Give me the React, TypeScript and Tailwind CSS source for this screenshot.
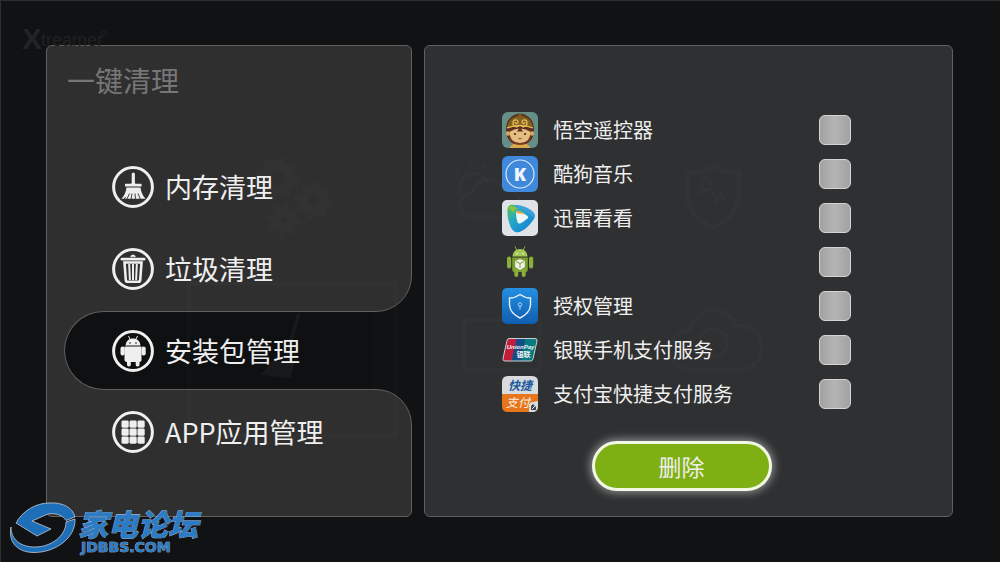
import { useState } from 'react'
import type { ReactNode } from 'react'

const APPS: { id: string; name: string; icon: ReactNode }[] = [
  { id: 'wukong', name: '悟空遥控器', icon: <WukongIcon /> },
  { id: 'kugou', name: '酷狗音乐', icon: <KugouIcon /> },
  { id: 'kankan', name: '迅雷看看', icon: <KankanIcon /> },
  { id: 'unnamed', name: '', icon: <AndroidAppIcon /> },
  { id: 'auth', name: '授权管理', icon: <ShieldIcon /> },
  { id: 'unionpay', name: '银联手机支付服务', icon: <UnionPayIcon /> },
  { id: 'alipay', name: '支付宝快捷支付服务', icon: <AlipayIcon /> },
]

export default function App() {
  const [checked, setChecked] = useState<string[]>([])

  const toggle = (id: string) =>
    setChecked((prev) => (prev.includes(id) ? prev.filter((x) => x !== id) : [...prev, id]))

  return (
    <main className="relative min-h-screen overflow-hidden border-t border-l border-[#2c3030] bg-[#111213] font-['Noto_Sans_CJK_SC',sans-serif] text-[#efefef]">
      <div className="grid grid-cols-[9fr_13fr] gap-3 pt-11 pr-[47px] pb-11 pl-[45px]">
        <nav aria-label="一键清理" className="flex flex-col">
          <div className="flex h-[267px] flex-col rounded-t-md rounded-br-[36px] border border-[#606060] bg-[#2f2f2f]">
            <h1 className="pt-3 pl-5 text-[28px] leading-[44px] text-[#777777]">一键清理</h1>
            <div className="flex flex-col gap-10 pt-16 pl-[65px]">
              <NavItem label="内存清理" icon={<BroomGlyph />} />
              <NavItem label="垃圾清理" icon={<TrashGlyph />} />
            </div>
          </div>

          {/* selected entry is cut out of the panel */}
          <div className="relative z-10 -my-px flex border-l border-[#606060] bg-linear-to-r from-[#2f2f2f] from-20% to-transparent to-20%">
            <div className="mr-10 ml-[17px] flex h-[79px] grow items-center rounded-l-full border-y border-l border-[#606060] bg-[#0f1011] pl-[47px]">
              <NavItem label="安装包管理" icon={<AndroidGlyph />} active />
            </div>
          </div>

          <div className="h-32 rounded-tr-[36px] rounded-b-md border border-[#606060] bg-[#2f2f2f] pt-[21px] pl-[65px]">
            <NavItem label="APP应用管理" icon={<GridGlyph />} />
          </div>
        </nav>

        <section
          aria-label="安装包管理"
          className="flex flex-col items-center rounded-md border border-[#606060] bg-[#2f3031] pt-[62px] pr-3.5"
        >
          <ul className="flex w-full flex-col pr-[87px] pl-[77px]">
            {APPS.map((app) => (
              <li key={app.id} className="flex h-11 items-center">
                <label htmlFor={app.id} className="flex grow items-center gap-[15px] text-xl leading-7">
                  <span className="size-9 shrink-0">{app.icon}</span>
                  {app.name}
                </label>
                <input
                  id={app.id}
                  type="checkbox"
                  aria-label={app.name || '未命名安装包'}
                  checked={checked.includes(app.id)}
                  onChange={() => toggle(app.id)}
                  className="h-[30px] w-8 appearance-none rounded-md border border-[#d4d4d4] bg-linear-to-r from-[#a2a2a2] via-[#b4b4b4] to-[#a2a2a2] checked:bg-[#7fb013] checked:bg-none"
                />
              </li>
            ))}
          </ul>
          <button
            type="button"
            onClick={() => setChecked([])}
            className="mt-[25px] h-[50px] w-[180px] rounded-full border-[3px] border-[#f1f8e4] bg-[#7fb013] text-[23px] leading-8 shadow-[0_0_9px_2px_rgba(255,255,255,0.45)]"
          >
            删除
          </button>
        </section>
      </div>

      <Backdrop />
      <SiteLogo />
    </main>
  )
}

function NavItem({ label, icon, active }: { label: string; icon: ReactNode; active?: boolean }) {
  return (
    <button
      type="button"
      aria-current={active ? 'page' : undefined}
      className="flex items-center gap-[11px] text-left text-[27px] leading-[42px]"
    >
      <svg viewBox="0 0 42 42" className="size-[42px] shrink-0" aria-hidden="true">
        <circle cx="21" cy="21" r="19.4" fill="none" stroke="#efefef" strokeWidth="3" />
        {icon}
      </svg>
      {label}
    </button>
  )
}

function BroomGlyph() {
  return (
    <g fill="#efefef">
      <rect x="19.7" y="6.5" width="3.2" height="13" rx="1.6" />
      <path d="M13 18.5q0-.8.8-.8h5.5l1-2h2l1 2h5.5q.8 0 .8.8v2H13z" />
      <path d="M14.5 21.5H28.5C29 25.5 30.5 29.5 33.5 32.8H9.5C12.5 29.5 14 25.5 14.5 21.5z" />
      <path
        d="M14.7 33.5l2.8-6M19 33.5l1-6M23.5 33.5l-.5-6M28.5 33.5l-2.5-6M12 33.5l1.5-2.5"
        stroke="#2f2f2f"
        strokeWidth="0.9"
      />
    </g>
  )
}

function TrashGlyph() {
  return (
    <g fill="none" stroke="#efefef">
      <path d="M10 11.2H32" strokeWidth="2.8" strokeLinecap="round" />
      <path d="M19 9q2-3 4 0" strokeWidth="2" />
      <path d="M12.5 14.5L13.8 32q.2 1.7 1.8 1.7H26.4q1.6 0 1.8-1.7L29.5 14.5z" strokeWidth="2.6" />
      <path d="M17.2 16l.7 16M21 16v16M24.8 16l-.7 16" strokeWidth="2" />
    </g>
  )
}

function AndroidGlyph() {
  return (
    <g fill="#efefef">
      <path d="M13.5 15.5c.5-4.5 3.5-7 7.5-7s7 2.5 7.5 7z" />
      <path d="M16.5 6l1.7 3.5M25.5 6l-1.7 3.5" stroke="#efefef" />
      <rect x="8.5" y="16.5" width="4.2" height="9" rx="2" />
      <rect x="29.5" y="16.5" width="4.2" height="9" rx="2" />
      <path d="M12.5 16.5h17v13q0 2.5-2.5 2.5H15q-2.5 0-2.5-2.5z" />
      <rect x="15" y="29" width="3.8" height="7.5" rx="1.7" />
      <rect x="23.7" y="29" width="3.8" height="7.5" rx="1.7" />
      <circle cx="18" cy="13" r="0.8" fill="#0f1011" />
      <circle cx="24" cy="13" r="0.8" fill="#0f1011" />
    </g>
  )
}

function GridGlyph() {
  return (
    <g fill="#efefef">
      {[9.5, 17.5, 25.5].map((y) =>
        [9.5, 17.5, 25.5].map((x) => (
          <rect key={`${x}-${y}`} x={x} y={y} width="7.2" height="7.2" rx="1.4" />
        )),
      )}
    </g>
  )
}

function WukongIcon() {
  return (
    <svg viewBox="0 0 36 36" aria-hidden="true">
      <rect width="36" height="36" rx="6" fill="#659088" />
      <path d="M8 36q1-5 10-5t10 5z" fill="#d9a94c" />
      <path d="M18 1.5C9 2.5 4 8.5 4 17.5q0 11 8 14.5h12q8-3.5 8-14.5C32 8.5 27 2.5 18 1.5z" fill="#5b301c" />
      <path d="M18 1L20 4C27 5.5 30.5 10 31 16q-13-4-26 0C5.5 10 9 5.5 16 4z" fill="#826020" />
      <circle cx="6" cy="21.5" r="2.2" fill="#d7a766" />
      <circle cx="30" cy="21.5" r="2.2" fill="#d7a766" />
      <path d="M8 19.5q10-6 20 0v4.5q-1 6.5-10 7-9-.5-10-7z" fill="#e5bd82" />
      <path
        d="M18 13c-2 3-7 2-7-2 0-4 5-4 5-1 0 2-3 2-3 0M18 13c2 3 7 2 7-2 0-4-5-4-5-1 0 2 3 2 3 0M5 16q13-5 26 0"
        fill="none"
        stroke="#e3bd55"
        strokeWidth="1.3"
      />
      <path d="M18 15l3 4.5h-6z" fill="#5b301c" />
      <circle cx="13" cy="22" r="1.1" fill="#402514" />
      <circle cx="23" cy="22" r="1.1" fill="#402514" />
      <path d="M16.5 26.5q1.5.7 3 0" fill="none" stroke="#7a4322" />
      <path d="M7.5 25q2 7 10.5 7t10.5-7" fill="none" stroke="#7a3a20" strokeWidth="1.8" />
    </svg>
  )
}

function KugouIcon() {
  return (
    <svg viewBox="0 0 36 36" aria-hidden="true">
      <rect width="36" height="36" rx="6" fill="#3f88da" />
      <circle cx="18" cy="18" r="14" fill="none" stroke="#d6e8fa" strokeWidth="1.2" />
      <text
        x="18"
        y="24.5"
        fontSize="18"
        fontWeight="900"
        textAnchor="middle"
        fontFamily="Open Sans, sans-serif"
        fill="#eef6fe"
      >
        K
      </text>
    </svg>
  )
}

function KankanIcon() {
  return (
    <svg viewBox="0 0 36 36" aria-hidden="true">
      <defs>
        <linearGradient id="kankan" x1="0" y1="0" x2="1" y2="1">
          <stop offset="0" stopColor="#63bf3c" />
          <stop offset="0.35" stopColor="#25abc0" />
          <stop offset="0.7" stopColor="#1a8fd2" />
          <stop offset="1" stopColor="#1672bd" />
        </linearGradient>
      </defs>
      <rect width="36" height="36" rx="5" fill="#dfe3e7" />
      <path
        d="M5.5 9C6 5 9 4.5 13 5 20 5.5 27 8 31 12c3 3 2 6-.5 9-3.5 5-8 9-13 11-5 1.5-8-2-10-8-1.5-5-2.5-10-2-15z"
        fill="url(#kankan)"
      />
      <path d="M13 5C20 5 27 8 31 12c2 2 2 4 1 6-4-5-11-9-19-10z" fill="#3d9fda" />
      <path d="M6 8c2-3 8-2 10 1-3 0-5 1-4 5-1-2-3-5-6-6z" fill="#8bc440" />
      <path d="M14 12.5q0-2 2-1.5 5 1 9.5 5 1.5 1.5 0 2.5-4 3.500-7.500 5-2 .5-2.500-1.500Q14 18 14 12.500z" fill="#f0f5f8" />
      <path d="M13.5 10.5q6 .5 10 4-4-1.5-8-1z" fill="#e6a13e" />
    </svg>
  )
}

function AndroidAppIcon() {
  return (
    <svg viewBox="0 0 36 36" aria-hidden="true">
      <g fill="#8aaf38">
        <path d="M10.5 12.5c.3-4.5 3-7.5 7.5-7.5s7.2 3 7.5 7.5z" fill="#a5c658" />
        <path d="M13 2.5l2 4M23 2.5l-2 4" stroke="#8aaf38" />
        <rect x="5" y="12.5" width="4.2" height="12" rx="2" />
        <rect x="27" y="12.5" width="4.2" height="12" rx="2" />
        <path d="M10.2 13.5h15.6V26q0 2-2 2H12.2q-2 0-2-2z" fill="#7b9f30" />
        <rect x="12.3" y="25" width="4" height="8" rx="2" />
        <rect x="19.7" y="25" width="4" height="8" rx="2" />
      </g>
      <circle cx="15" cy="9.5" r="0.8" fill="#f3f8e4" />
      <circle cx="21" cy="9.5" r="0.8" fill="#f3f8e4" />
      <path d="M18 15l4.8 2v6L18 26l-4.8-3v-6z" fill="#f0f1ec" />
      <path d="M14 17.5l4 2 4-2M18 19.5V24" fill="none" stroke="#7b9f30" />
    </svg>
  )
}

function ShieldIcon() {
  return (
    <svg viewBox="0 0 36 36" aria-hidden="true">
      <defs>
        <linearGradient id="shield" x1="0" y1="0" x2="0" y2="1">
          <stop offset="0" stopColor="#2390e2" />
          <stop offset="1" stopColor="#0f5cb0" />
        </linearGradient>
      </defs>
      <rect width="36" height="36" rx="5" fill="url(#shield)" />
      <path
        d="M18 6.5q5 3.5 10.5 3.5v7Q28 25 18 30 8 25 7.5 17v-7Q13 10 18 6.5z"
        fill="none"
        stroke="#e3f0fc"
        strokeWidth="1.4"
      />
      <circle cx="18" cy="16.5" r="1.8" fill="none" stroke="#bcdcf8" strokeWidth="0.9" />
      <path d="M18 18.3V21.5" stroke="#bcdcf8" />
    </svg>
  )
}

function UnionPayIcon() {
  return (
    <svg viewBox="0 0 36 36" aria-hidden="true">
      <path d="M7 6.5H16L11.5 29H3q-2.5 0-2-2.5L5 8.5Q5.4 6.5 7 6.5z" fill="#c41d3c" />
      <path d="M14.5 6.5H25L20.5 29H9.5z" fill="#144b86" />
      <path d="M23.5 6.5h9.5q2.5 0 2 2.5L31 27q-.5 2-2.5 2H19z" fill="#087b80" />
      <path
        d="M7 6.5H33q2.5 0 2 2.5L31 27q-.5 2-2.5 2H3q-2.5 0-2-2.5L5 8.5Q5.4 6.5 7 6.5z"
        fill="none"
        stroke="#c9cfd0"
      />
      <text x="18.5" y="16.5" fontSize="6" fontWeight="700" fontStyle="italic" textAnchor="middle" fontFamily="Liberation Sans, sans-serif" fill="#f2f2f2">
        UnionPay
      </text>
      <text x="21.5" y="25" fontSize="7" fontWeight="700" textAnchor="middle" fill="#f2f2f2">
        银联
      </text>
    </svg>
  )
}

function AlipayIcon() {
  return (
    <svg viewBox="0 0 36 36" aria-hidden="true">
      <path d="M0 18V6q0-6 6-6H30q6 0 6 6V18z" fill="#d9dcdf" />
      <path d="M0 18H36V30q0 6-6 6H6q-6 0-6-6z" fill="#e5761c" />
      <text x="18" y="14" fontSize="12" fontWeight="700" fontStyle="italic" textAnchor="middle" fill="#1b5a9e">
        快捷
      </text>
      <text x="16" y="31" fontSize="12" fontStyle="italic" textAnchor="middle" fill="#fbeee0">
        支付
      </text>
      <path d="M36 25v5q0 6-6 6h-3v-6q0-4 4-4z" fill="#d9dcdf" />
      <path d="M29 34v-4l2-2 3 3v3z" fill="#3c4a55" />
      <path d="M30 33l3-3" fill="none" stroke="#e8ebed" />
    </svg>
  )
}

// Home screen faintly visible through the dialog
function Backdrop() {
  return (
    <svg
      viewBox="0 0 1000 562"
      preserveAspectRatio="xMidYMin slice"
      className="pointer-events-none absolute inset-0 z-20 size-full"
      aria-hidden="true"
    >
      <text x="21" y="48" fontSize="30" fontWeight="700" fontFamily="Liberation Sans, sans-serif" fill="#222324">
        X
      </text>
      <text x="40" y="45" fontSize="18" fontFamily="Liberation Sans, sans-serif" fill="#202122">
        treamer
      </text>
      <circle cx="103" cy="32" r="2.5" fill="none" stroke="#202122" />
      <g fill="none" stroke="#ffffff" strokeOpacity="0.016">
        <rect x="188" y="283" width="207" height="152" strokeWidth="4" />
        <g strokeWidth="10">
          <circle cx="276" cy="178" r="13" />
          <circle cx="313" cy="200" r="10" />
          <circle cx="283" cy="219" r="8" />
        </g>
        <g strokeWidth="4">
          <circle cx="276" cy="178" r="20" strokeDasharray="7.85 7.85" />
          <circle cx="313" cy="200" r="17" strokeDasharray="6.67 6.67" />
          <circle cx="283" cy="219" r="15" strokeDasharray="5.89 5.89" />
        </g>
        <path d="M460 192a14 14 0 1 1 27-10M451 183h5M455 169l4 3M469 160v5M484 163l-3 4" strokeWidth="4" />
        <path d="M468 216a13 13 0 0 1 4-25 17 17 0 0 1 32-2 13 13 0 0 1 4 27z" strokeWidth="4" />
        <path d="M713 165q10 7 26 7v20q-1 24-26 35-25-11-26-35v-20q16 0 26-7z" strokeWidth="5" />
        <circle cx="706" cy="183" r="6" strokeWidth="3" />
        <path d="M697 194q9-10 18 1v6l6-8 5 8" strokeWidth="3" />
        <path d="M690 369a20 20 0 0 1 0-40 24 24 0 0 1 46-4 22 22 0 0 1 6 44z" strokeWidth="4" />
        <circle cx="713" cy="342" r="14" strokeWidth="4" />
        <path d="M463 319h76v50h-76z" strokeWidth="4" />
      </g>
      <path d="M300 313l-13 44-3-1 12-43zM260 374l12-14h22l-4 18z" fill="#ffffff" fillOpacity="0.04" />
      <g fill="#ffffff" fillOpacity="0.02" fontSize="16">
        <text x="277" y="260">设置</text>
        <text x="480" y="262">天气</text>
        <text x="680" y="262">安全管理</text>
        <text x="465" y="417">应用</text>
      </g>
    </svg>
  )
}

function SiteLogo() {
  return (
    <a href="#home" className="absolute bottom-0 left-2 z-30 w-[196px]" aria-label="家电论坛 JDBBS.COM">
      <svg viewBox="0 0 196 64" className="w-full">
        <g fill="#1f6fb8" stroke="#d6dbe8" strokeWidth="0.7">
          <path d="M7 25C14 12 28 5 40 5c14-1 24 5 26 14l-9 3.5C53 16 45 15 39 16l-16 7 19 8-14 7z" />
          <path d="M66 21c1 19-20 34-42 33.5C8 54 -1 44 2 29c0 13 10 20 24 20 16 0 31-11 31-25z" />
        </g>
        <g fill="#2b7cc4" stroke="#c9d0e0" strokeWidth="0.6" paintOrder="stroke">
          <text x="69" y="38" fontSize="30" fontWeight="900" fontStyle="italic">
            家电论坛
          </text>
          <text x="72" y="54" fontSize="14" fontWeight="700" fontFamily="DejaVu Sans, sans-serif">
            JDBBS.COM
          </text>
        </g>
      </svg>
    </a>
  )
}
